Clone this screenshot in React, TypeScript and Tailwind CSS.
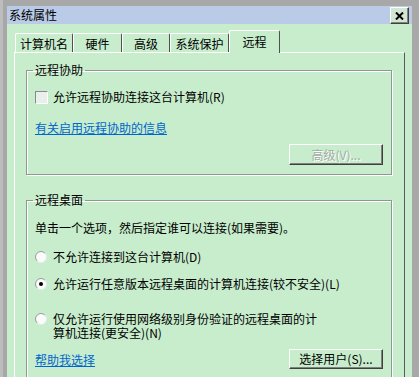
function Radio({ checked }: { checked?: boolean }) {
  return (
    <svg width="12" height="12" viewBox="0 0 12 12" className="shrink-0">
      <circle cx="6" cy="6" r="5.5" fill="#fbfbfb" stroke="#e4efe5" />
      <path d="M2.1 9.9 A5.5 5.5 0 0 1 9.9 2.1" fill="none" stroke="#9a9a9a" />
      {checked && <circle cx="6" cy="6" r="2" fill="#000" />}
    </svg>
  );
}

function Tab({ label, width, active }: { label: string; width: string; active?: boolean }) {
  if (active) {
    return (
      <div
        className={`${width} h-[23px] -mb-px relative z-10 bg-[#c7edcc] border-t border-l border-white border-r border-r-[#505050] rounded-t-[2px] flex items-center justify-center`}
      >
        {label}
      </div>
    );
  }
  return (
    <div
      className={`${width} h-[19px] border-t border-l border-white border-r border-r-[#505050] rounded-t-[2px] flex items-center justify-center pt-[1px]`}
    >
      {label}
    </div>
  );
}

export default function App() {
  return (
    <div className="w-[419px] h-[377px] overflow-hidden bg-[#a8a8a8] border-l-[3px] border-l-[#bdbdbd] pl-[4px] pr-[7px] pt-[6px] font-['Noto_Sans_CJK_SC',sans-serif] text-[12px] leading-[14px] text-black">
      <div className="h-full bg-[#c7edcc] flex flex-col">
        {/* title bar */}
        <div className="h-[21px] bg-[#b9cbe6] flex items-center justify-between pl-[2px] pr-[3px]">
          <span>系统属性</span>
          <div className="w-[19px] h-[17px] mt-[1px] bg-[#d2e6d4] border border-t-white border-l-white border-r-[#404040] border-b-[#404040] shadow-[inset_-1px_-1px_0_#808080] flex items-center justify-center">
            <svg width="9" height="8" viewBox="0 0 9 8">
              <path d="M1 0.5 L8 7.5 M8 0.5 L1 7.5" stroke="#000" strokeWidth="2" />
            </svg>
          </div>
        </div>

        {/* body */}
        <div className="flex-1 flex flex-col px-[7px] pt-[6px]">
          <div className="flex items-end h-[22px] pl-[1px]">
            <Tab label="计算机名" width="w-[58px]" />
            <Tab label="硬件" width="w-[49px]" />
            <Tab label="高级" width="w-[48px]" />
            <Tab label="系统保护" width="w-[59px]" />
            <Tab label="远程" width="w-[51px]" active />
          </div>

          <div className="flex-1 border-t border-l border-white border-r border-r-[#5a5a5a] pl-[11px] pr-[12px]">
            {/* 远程协助 */}
            <fieldset className="mt-[10px] border border-[#8c9a8e] shadow-[1px_1px_0_#fff,inset_1px_1px_0_#fff] px-[8px] pb-[9px]">
              <legend className="px-[2px] -ml-[2px]">远程协助</legend>
              <div className="mt-[13px] flex items-center h-[14px] gap-[5px]">
                <div className="w-[13px] h-[13px] bg-[#e9efe9] border border-t-[#8a8a8a] border-l-[#8a8a8a] border-r-white border-b-white" />
                <span>允许远程协助连接这台计算机(R)</span>
              </div>
              <div className="mt-[17px]">
                <span className="text-[#0066cc] underline">有关启用远程协助的信息</span>
              </div>
              <div className="mt-[9px] flex justify-end">
                <div className="w-[94px] h-[21px] border border-t-white border-l-white border-r-[#404040] border-b-[#404040] shadow-[inset_-1px_-1px_0_#808080] flex items-center justify-center text-[#a3aba4] [text-shadow:1px_1px_0_#fff]">
                  高级(V)...
                </div>
              </div>
            </fieldset>

            {/* 远程桌面 */}
            <fieldset className="mt-[18px] border border-[#8c9a8e] shadow-[1px_1px_0_#fff,inset_1px_1px_0_#fff] px-[8px] pb-[9px]">
              <legend className="px-[2px] -ml-[2px]">远程桌面</legend>
              <div className="mt-[14px]">单击一个选项，然后指定谁可以连接(如果需要)。</div>
              <div className="mt-[15px] flex items-center h-[14px] gap-[6px]">
                <Radio />
                <span>不允许连接到这台计算机(D)</span>
              </div>
              <div className="mt-[13px] flex items-center h-[14px] gap-[6px]">
                <Radio checked />
                <span>允许运行任意版本远程桌面的计算机连接(较不安全)(L)</span>
              </div>
              <div className="mt-[21px] flex items-start gap-[6px]">
                <div className="pt-[1px]">
                  <Radio />
                </div>
                <span>
                  仅允许运行使用网络级别身份验证的远程桌面的计
                  <br />
                  算机连接(更安全)(N)
                </span>
              </div>
              <div className="mt-[9px] flex items-center justify-between">
                <span className="text-[#0066cc] underline mt-[2px]">帮助我选择</span>
                <div className="w-[94px] h-[20px] border border-t-white border-l-white border-r-[#404040] border-b-[#404040] shadow-[inset_-1px_-1px_0_#808080] flex items-center justify-center">
                  选择用户(S)...
                </div>
              </div>
            </fieldset>
          </div>
        </div>
      </div>
    </div>
  );
}
